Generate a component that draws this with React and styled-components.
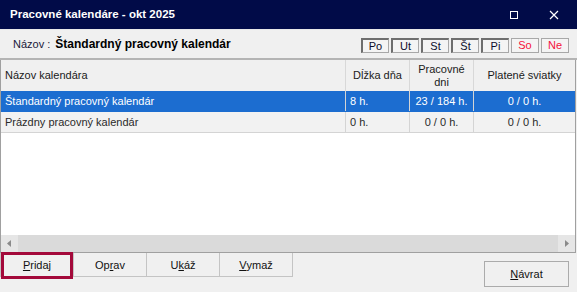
import React from "react";
import styled, { createGlobalStyle } from "styled-components";

const GlobalStyle = createGlobalStyle`
  html, body {
    margin: 0;
    padding: 0;
    background: #f0f0f0;
  }
  body {
    font-family: "Liberation Sans", Arial, sans-serif;
    font-size: 11px;
    color: #000;
  }
`;

const days = [
  { label: "Po", active: true },
  { label: "Ut", active: true },
  { label: "St", active: true },
  { label: "Št", active: true },
  { label: "Pi", active: true },
  { label: "So", weekend: true },
  { label: "Ne", weekend: true },
];

const rows = [
  { name: "Štandardný pracovný kalendár", length: "8 h.", work: "23 / 184 h.", paid: "0 / 0 h.", selected: true },
  { name: "Prázdny pracovný kalendár", length: "0 h.", work: "0 / 0 h.", paid: "0 / 0 h." },
];

export default function App() {
  return (
    <>
      <GlobalStyle />
      <Window>
        <TitleBar>
          <Title>Pracovné kalendáre - okt 2025</Title>
          <WinButton aria-label="maximize">
            <svg width="10" height="10" viewBox="0 0 10 10">
              <rect x="1.5" y="1.5" width="7" height="7" fill="none" stroke="#fff" strokeWidth="1" />
            </svg>
          </WinButton>
          <WinButton aria-label="close">
            <svg width="10" height="10" viewBox="0 0 10 10">
              <path d="M1 1 L9 9 M9 1 L1 9" stroke="#fff" strokeWidth="1.2" />
            </svg>
          </WinButton>
        </TitleBar>

        <NameRow>
          <NameLabel>Názov :</NameLabel>
          <NameValue>Štandardný pracovný kalendár</NameValue>
          <DayStrip>
            {days.map((d) => (
              <DayBox key={d.label} $active={d.active} $weekend={d.weekend}>
                {d.label}
              </DayBox>
            ))}
          </DayStrip>
        </NameRow>

        <Grid>
          <HeaderRow>
            <HeadCell>Názov kalendára</HeadCell>
            <HeadCell $center>Dĺžka dňa</HeadCell>
            <HeadCell $center>
              Pracovné
              <br />
              dni
            </HeadCell>
            <HeadCell $center>Platené sviatky</HeadCell>
          </HeaderRow>
          {rows.map((r) => (
            <Row key={r.name} $selected={r.selected}>
              <Cell>{r.name}</Cell>
              <Cell>{r.length}</Cell>
              <Cell $center>{r.work}</Cell>
              <Cell $center>{r.paid}</Cell>
            </Row>
          ))}
          <Empty />
          <ScrollBar>
            <ScrollArrow>
              <svg width="5" height="7" viewBox="0 0 5 7">
                <path d="M4 0 L0 3.5 L4 7 Z" fill="#8a8a8a" />
              </svg>
            </ScrollArrow>
            <Track />
            <ScrollArrow>
              <svg width="5" height="7" viewBox="0 0 5 7">
                <path d="M1 0 L5 3.5 L1 7 Z" fill="#8a8a8a" />
              </svg>
            </ScrollArrow>
          </ScrollBar>
        </Grid>

        <ButtonBar>
          <ButtonGroup>
            <ToolButton $focused>
              <u>P</u>ridaj
            </ToolButton>
            <ToolButton>
              Op<u>r</u>av
            </ToolButton>
            <ToolButton>
              U<u>k</u>áž
            </ToolButton>
            <ToolButton>
              <u>V</u>ymaž
            </ToolButton>
          </ButtonGroup>
          <ReturnButton>
            <u>N</u>ávrat
          </ReturnButton>
        </ButtonBar>
      </Window>
    </>
  );
}

const Window = styled.div`
  width: 577px;
  height: 292px;
  display: flex;
  flex-direction: column;
  background: #f0f0f0;
  overflow: hidden;
`;

const TitleBar = styled.div`
  height: 29px;
  flex: none;
  display: flex;
  align-items: center;
  background: #010b48;
  color: #fff;
  padding-left: 10px;
  border-bottom: 1px solid #e8e8e8;
`;

const Title = styled.div`
  flex: 1;
  font-weight: bold;
  font-size: 11.5px;
  padding-bottom: 1px;
`;

const WinButton = styled.div`
  width: 42px;
  height: 29px;
  display: flex;
  align-items: center;
  justify-content: center;
  &:last-child {
    width: 38px;
    margin-right: 4px;
  }
`;

const NameRow = styled.div`
  height: 28px;
  flex: none;
  display: flex;
  align-items: center;
  padding-left: 13px;
  padding-right: 8px;
  border-bottom: 2px solid #b4b4b4;
`;

const NameLabel = styled.span`
  color: #1a1a3a;
  margin-right: 5px;
`;

const NameValue = styled.span`
  font-weight: bold;
  font-size: 12px;
  flex: 1;
`;

const DayStrip = styled.div`
  display: flex;
  gap: 2px;
  margin-top: 2px;
`;

const DayBox = styled.div`
  width: 28px;
  height: 15px;
  box-sizing: border-box;
  display: flex;
  align-items: center;
  justify-content: center;
  background: #f4f4f4;
  color: ${(p) => (p.$weekend ? "#f5123c" : "#0c0c2c")};
  border: 1px solid #a8a8a8;
  ${(p) =>
    p.$active &&
    `
    border-top: 2px solid #6e6e6e;
    border-left: 2px solid #6e6e6e;
  `}
`;

const Grid = styled.div`
  flex: none;
  height: 192px;
  display: flex;
  flex-direction: column;
  border-left: 1px solid #a0a0a0;
  border-right: 1px solid #a0a0a0;
  border-bottom: 1px solid #a0a0a0;
  margin-right: 1px;
  background: #fff;
`;

const columns = "345px 64px 64px 1fr";

const HeaderRow = styled.div`
  display: grid;
  grid-template-columns: ${columns};
  height: 31px;
  flex: none;
  background: #f0f0f0;
`;

const HeadCell = styled.div`
  display: flex;
  align-items: center;
  justify-content: ${(p) => (p.$center ? "center" : "flex-start")};
  text-align: ${(p) => (p.$center ? "center" : "left")};
  padding-left: ${(p) => (p.$center ? "0" : "4px")};
  line-height: 13px;
  color: #1a1a1a;
  border-right: 1px solid #d8d8d8;
  &:last-child {
    border-right: none;
  }
`;

const Row = styled.div`
  display: grid;
  grid-template-columns: ${columns};
  height: 21px;
  flex: none;
  background: ${(p) => (p.$selected ? "#1c6dd0" : "#f2f2f2")};
  color: ${(p) => (p.$selected ? "#fff" : "#2a2a2a")};
  border-bottom: 1px solid ${(p) => (p.$selected ? "#1c6dd0" : "#d4d4d4")};
  box-sizing: border-box;
`;

const Cell = styled.div`
  display: flex;
  align-items: center;
  justify-content: ${(p) => (p.$center ? "center" : "flex-start")};
  padding-left: ${(p) => (p.$center ? "0" : "4px")};
  border-right: 1px solid #d4d4d4;
  white-space: nowrap;
  &:last-child {
    border-right: none;
  }
`;

const Empty = styled.div`
  flex: 1;
  background: #fff;
`;

const ScrollBar = styled.div`
  height: 17px;
  flex: none;
  display: flex;
  background: #dadada;
`;

const ScrollArrow = styled.div`
  width: 17px;
  display: flex;
  align-items: center;
  justify-content: center;
  background: #e6e6e6;
`;

const Track = styled.div`
  flex: 1;
`;

const ButtonBar = styled.div`
  flex: 1;
  display: flex;
  justify-content: space-between;
  align-items: flex-start;
  padding-right: 8px;
`;

const ButtonGroup = styled.div`
  display: flex;
`;

const ToolButton = styled.div`
  position: relative;
  width: 74px;
  height: 24px;
  box-sizing: border-box;
  margin-left: -1px;
  display: flex;
  align-items: center;
  justify-content: center;
  border: 1px solid #c4c4c4;
  border-top: none;
  background: #f0f0f0;
  color: #111;
  &:first-child {
    margin-left: 0;
  }
  ${(p) =>
    p.$focused &&
    `
    &::after {
      content: "";
      position: absolute;
      left: 0;
      top: -1px;
      right: 0;
      bottom: -3px;
      border: 3px solid #a3093a;
    }
  `}
`;

const ReturnButton = styled.div`
  width: 85px;
  height: 26px;
  box-sizing: border-box;
  margin-top: 8px;
  display: flex;
  align-items: center;
  justify-content: center;
  border: 1px solid #ababab;
  background: #f0f0f0;
  color: #111;
`;
